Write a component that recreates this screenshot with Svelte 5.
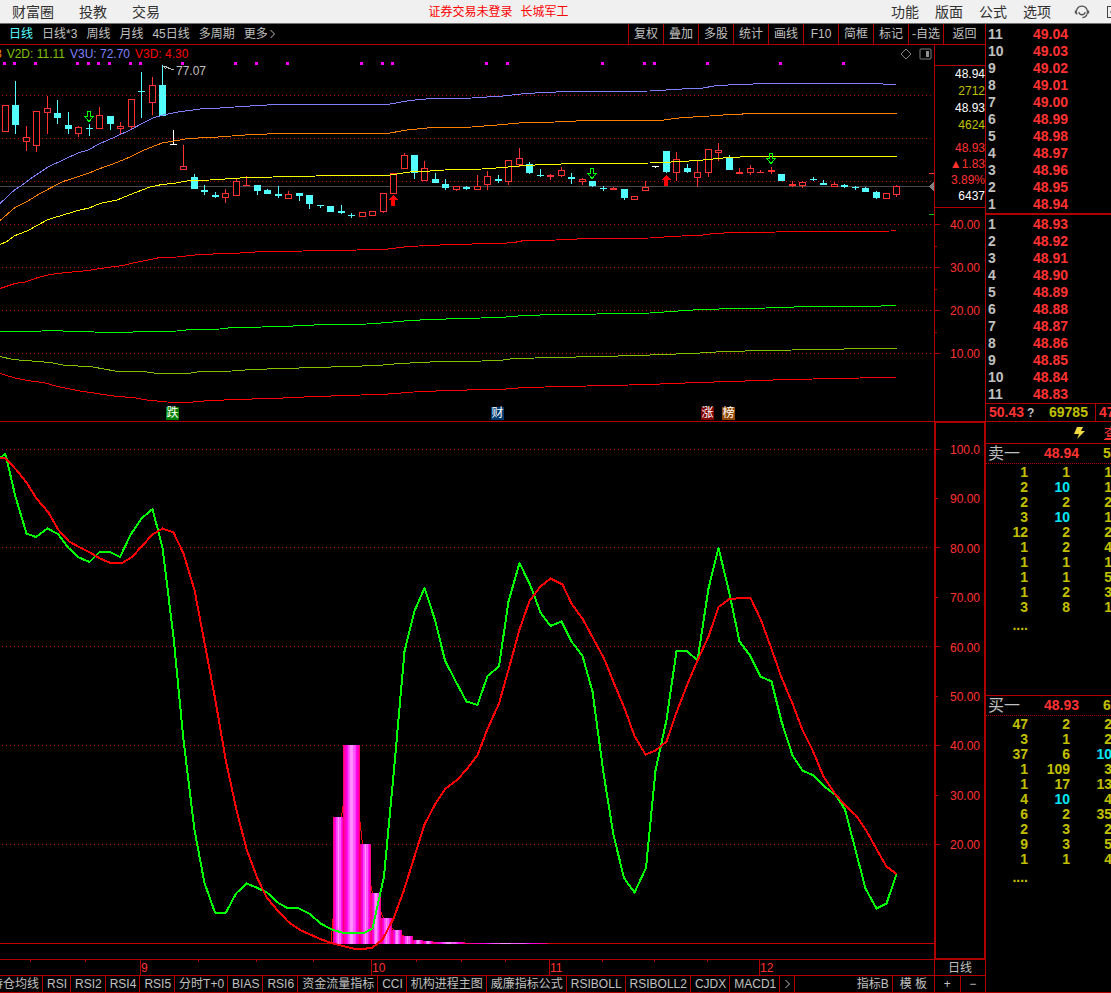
<!-- App.svelte - Daily K-line terminal with indicator pane and order book -->
<script lang="ts">
  type Kind = 'up' | 'down' | 'flat' | 'limit';
  type Candle = [x: number, high: number, top: number, bottom: number, low: number, kind: Kind];

  const menuLeft = ['财富圈', '投教', '交易'];
  const menuRight = ['功能', '版面', '公式', '选项'];

  const periods = ['日线', '日线*3', '周线', '月线', '45日线', '多周期', '更多'];
  const tools = ['复权', '叠加', '多股', '统计', '画线', 'F10', '简框', '标记', '-自选', '返回'];

  const quotes = [
    { text: '48.94', tone: 'white' },
    { text: '2712', tone: 'olive' },
    { text: '48.93', tone: 'white' },
    { text: '4624', tone: 'olive' },
    { text: '48.93', tone: 'red' },
    { text: '▲1.83', tone: 'red' },
    { text: '3.89%', tone: 'red' },
    { text: '6437', tone: 'white' },
  ];

  const priceTicks = ['40.00', '30.00', '20.00', '10.00'];
  const rsiTicks = ['100.0', '90.00', '80.00', '70.00', '60.00', '50.00', '40.00', '30.00', '20.00'];

  const tabs = [
    '持仓均线', 'RSI', 'RSI2', 'RSI4', 'RSI5', '分时T+0', 'BIAS', 'RSI6', '资金流量指标', 'CCI',
    '机构进程主图', '威廉指标公式', 'RSIBOLL', 'RSIBOLL2', 'CJDX', 'MACD1',
  ];

  const months = ['', '9', '10', '11', '12'];
  const weekTicks = [30, 85, 198, 256, 313, 416, 461, 505, 602, 654, 707];

  const priceGrid = [95, 138, 181, 224, 267, 310, 353];
  const rsiGrid = [449, 547, 646, 745, 844];

  const signalDots = [
    4, 14, 35, 77, 88, 98, 109, 130, 140, 182, 235, 256, 287, 361, 382, 392, 486, 507, 602, 644, 654, 707, 780, 843,
  ];

  const bands = [
    {
      color: '#8080ff',
      points: '0,203.5 15,189.5 21,186 33,177 48,167 63,160 78,153 88,150 100,143.5 115,137 130,130 143,123 153,118 163,115 178,112 200,109 220,108 242,106.5 275,104.5 387,104.5 410,100.5 432,98.5 472,98 503,96 525,93.5 567,91.5 650,91 682,89 703,88 717,85.5 740,84.5 766,83.5 870,83.5 896,84.5',
    },
    {
      color: '#ff8000',
      points: '0,220.5 15,207.5 27,201.5 40,193.5 63,181.5 88,173.5 100,168.5 113,164 130,157 143,150.5 162,143 177,140.5 188,138.5 218,137 252,134.5 283,133.5 387,133.5 407,130 432,127.5 472,127 503,124.5 525,122.5 555,122 587,120.5 660,120.5 683,117.5 703,116.5 723,115 740,114.5 745,113.5 896,113.5',
    },
    {
      color: '#ffff00',
      points: '0,244.5 7,241.5 14,236 28,230.5 37,225.5 48,219.5 63,215 78,210.5 89,208 100,203.5 117,200 133,193.5 150,187 162,184.5 173,183.5 190,180.5 210,180 240,178 273,177 337,175.5 387,175.5 410,172 430,171 452,169.5 482,169 503,167.5 525,165.5 545,164.5 577,163.5 650,163 682,161.5 703,160 723,158 740,157 755,156.5 896,156.5',
    },
    {
      color: '#ff0000',
      points: '0,288.5 15,283.5 25,282 38,277.5 50,274.5 62,273 88,270.5 100,268.5 123,265.5 133,263 143,261 160,257.5 177,257 200,254.5 240,253 263,251.5 303,251 357,250 388,249 408,246.5 440,245 472,244 500,243.5 514,242.5 524,240.5 556,240 588,238.5 650,238 671,236.5 703,235 714,233.5 734,232.5 776,232 891,231 896,230.5',
    },
    {
      color: '#00ff00',
      points: '0,331.5 3,332 10,331.5 42,331 53,330.5 73,331.5 115,332.5 126,333 137,331.5 177,331 190,329.5 220,329 232,327.5 262,327 293,326 325,324.5 367,324 388,322.5 410,320.5 430,319.5 462,318.5 500,317.5 524,315.5 556,314.5 597,314 650,313 671,311.5 693,310 714,309.5 724,308.5 766,308 808,306.5 881,306 896,305.5',
    },
    {
      color: '#80c000',
      points: '0,356.5 13,359.5 32,361 50,362.5 63,365 93,367 115,371 147,372 158,373.5 188,373.5 200,371.5 232,371 252,369.5 283,368.5 315,367.5 347,366.5 378,365.5 400,363.5 420,362.5 440,361.5 482,361 500,360.5 514,358.5 556,357.5 597,356.5 640,355.5 661,354.5 692,353.5 724,351.5 766,350.5 818,349.5 871,348.5 896,348.5',
    },
    {
      color: '#ff0000',
      points: '0,373.5 15,378 27,380.5 43,382.5 58,386.5 77,390.5 97,393.5 117,396.5 133,397.5 147,400 167,402 188,402.5 210,400.5 252,399 283,398 315,396.5 347,395.5 388,394 420,391.5 452,390.5 482,389.5 500,389.5 524,387.5 566,386.5 608,385.5 650,384.5 671,383.5 714,382 745,381 787,379.5 839,378.5 881,377.5 896,377',
    },
  ];

  const candles: Candle[] = [
    [5.5, 105, 105, 132, 132, 'up'], [15.5, 81, 105, 125, 134, 'down'], [26.5, 126, 137, 142, 151, 'up'],
    [36.5, 111, 111, 146, 152, 'up'], [47.5, 96, 108, 113, 134, 'up'], [57.5, 100, 113, 118, 124, 'down'],
    [68.5, 112, 125, 129, 134, 'down'], [78.5, 126, 127, 134, 137, 'up'], [89.5, 124, 128, 129, 136, 'down'],
    [99.5, 107, 115, 129, 129, 'up'], [110.5, 116, 116, 124, 130, 'down'], [120.5, 122, 126, 129, 134, 'up'],
    [131.5, 99, 99, 127, 130, 'up'], [141.5, 72, 91, 92, 118, 'down'], [152.5, 77, 85, 103, 115, 'up'],
    [162.5, 65, 85, 116, 116, 'down'], [173.5, 130, 144, 145, 145, 'limit'], [183.5, 145, 166, 170, 170, 'up'],
    [194.5, 174, 177, 189, 189, 'down'], [204.5, 185, 190, 192, 195, 'down'], [215.5, 192, 195, 197, 198, 'down'],
    [225.5, 189, 193, 198, 203, 'up'], [236.5, 178, 181, 196, 196, 'up'], [246.5, 176, 185, 186, 186, 'flat'],
    [257.5, 185, 185, 191, 195, 'down'], [267.5, 189, 190, 194, 194, 'down'], [278.5, 186, 194, 196, 198, 'down'],
    [288.5, 191, 194, 199, 199, 'up'], [299.5, 193, 193, 196, 201, 'down'], [309.5, 195, 195, 204, 209, 'down'],
    [320.5, 205, 205, 206, 208, 'down'], [330.5, 206, 206, 212, 212, 'down'], [341.5, 205, 211, 213, 214, 'down'],
    [351.5, 213, 215, 216, 218, 'down'], [362.5, 212, 212, 217, 217, 'up'], [372.5, 211, 211, 216, 216, 'up'],
    [383.5, 193, 193, 212, 213, 'up'], [393.5, 173, 173, 194, 194, 'up'], [404.5, 153, 155, 169, 169, 'up'],
    [414.5, 155, 155, 173, 179, 'down'], [424.5, 161, 168, 181, 181, 'up'], [435.5, 173, 179, 183, 183, 'down'],
    [445.5, 179, 184, 188, 190, 'down'], [456.5, 186, 186, 190, 191, 'up'], [466.5, 186, 187, 189, 190, 'down'],
    [477.5, 175, 186, 190, 190, 'up'], [487.5, 171, 176, 185, 190, 'up'], [498.5, 175, 179, 181, 183, 'down'],
    [508.5, 160, 160, 182, 185, 'up'], [519.5, 148, 158, 165, 167, 'up'], [529.5, 162, 164, 173, 174, 'down'],
    [540.5, 169, 175, 176, 177, 'down'], [550.5, 174, 175, 177, 180, 'flat'], [561.5, 167, 170, 176, 177, 'up'],
    [571.5, 173, 177, 179, 184, 'down'], [582.5, 178, 179, 182, 185, 'up'], [592.5, 181, 181, 186, 187, 'down'],
    [603.5, 186, 188, 189, 191, 'down'], [613.5, 187, 188, 190, 190, 'flat'], [624.5, 189, 189, 198, 200, 'down'],
    [634.5, 196, 196, 200, 200, 'up'], [645.5, 181, 187, 191, 191, 'up'], [655.5, 166, 166, 167, 168, 'limit'],
    [666.5, 151, 151, 172, 173, 'down'], [676.5, 152, 159, 173, 181, 'up'], [687.5, 164, 168, 172, 173, 'down'],
    [697.5, 161, 172, 178, 187, 'up'], [708.5, 149, 149, 173, 177, 'up'], [718.5, 143, 150, 153, 161, 'up'],
    [729.5, 155, 157, 170, 170, 'down'], [739.5, 168, 172, 174, 174, 'flat'], [750.5, 165, 168, 173, 175, 'up'],
    [760.5, 170, 172, 173, 173, 'flat'], [771.5, 167, 170, 172, 174, 'flat'], [781.5, 174, 174, 181, 181, 'down'],
    [792.5, 181, 184, 186, 187, 'flat'], [802.5, 181, 182, 186, 188, 'up'], [813.5, 177, 179, 180, 181, 'down'],
    [823.5, 180, 183, 185, 185, 'down'], [834.5, 182, 184, 187, 187, 'up'], [844.5, 184, 185, 187, 188, 'down'],
    [855.5, 186, 187, 188, 190, 'down'], [865.5, 187, 188, 192, 192, 'down'], [876.5, 191, 192, 198, 199, 'down'],
    [886.5, 193, 193, 199, 199, 'up'], [896.5, 185, 186, 195, 197, 'up'],
  ];

  const sellArrows = [[89, 111], [592, 168], [771, 153]];
  const buyArrows = [[393, 195], [666, 175]];

  const events = [
    { text: '跌', x: 166, tone: 'green' },
    { text: '财', x: 491, tone: 'blue' },
    { text: '涨', x: 701, tone: 'maroon' },
    { text: '榜', x: 722, tone: 'brown' },
  ];

  // x, width, top of each energy bar
  const bars = [
    [333, 11, 817], [343, 17, 745], [360, 11, 844], [371, 10, 893], [381, 11, 918], [392, 10, 930],
    [402, 11, 936], [413, 10, 940], [423, 10, 941], [433, 32, 942], [465, 83, 943],
  ];

  const fastLine =
    '0,458 5,454 6,456 15,495 26.5,533.5 36,537 47.5,528.5 58,534 68,547.5 79,557.5 89.5,562 99.5,552 110,552 120,557 131,534 142,518 152.5,509 162.5,547.5 173.5,637 183.5,740 194.5,830 204.5,883 215,912.5 226,912.5 236,893.5 246.5,883.5 256.5,887.5 267,892.5 279,903.5 287.5,908 299,908.5 310,914 320.5,923.5 332,929.5 341.5,932.5 365,932.5 372.5,928.5 384,876.5 394,770 404.5,651.5 414.5,611 424.5,588 435,620 445,660.5 455,680 466.5,701.5 477.5,705 487.5,676 499,666.5 508.5,601.5 519.5,563 530,584.5 540.5,612.5 550.5,626 561.5,621.5 571.5,641.5 582.5,656 592.5,691.5 603.5,773 613.5,835 624,878 634.5,892.5 646,868 655.5,770.5 666.5,720 676.5,651 687,651 697.5,660.5 708.5,588.5 718.5,548 729,591.5 739.5,641.5 750,655.5 760.5,676.5 771.5,681.5 781.5,721.5 792.5,755.5 802.5,770.5 813.5,775.5 824.5,786.5 835.5,795 845,809.5 855.5,850 865.5,888.5 876.5,908.5 886.5,903.5 896.5,874';

  const slowLine =
    '0,458 5,458 16.5,470 26.5,482.5 36.5,498.5 48.5,512.5 58.5,530 69,541.5 80,547.5 90,552.5 100,558.5 110.5,563 122,563 132,557 142.5,545.5 152.5,534.5 162.5,528.5 173.5,532.5 183.5,553.5 194.5,590 204,640 215,698 226,761.5 236.5,810 246.5,849 257.5,878.5 266.5,897 277.5,910.5 288.5,922 300,930 310,934.5 321.5,939.5 333,943.5 353,948.5 366.5,948.5 372.5,947.5 382.5,939.5 393.5,918.5 403.5,891.5 414.5,856.5 424.5,824.5 435,804.5 445.5,788.5 456.5,780.5 467.5,768.5 477.5,755 487.5,729 499,703.5 509,668 519.5,629.5 529.5,601 540.5,586.5 550.5,578.5 562.5,584.5 571.5,603.5 583,619.5 593.5,639 604,658.5 612.5,679.5 625,709.5 634.5,736 645.5,754.5 655.5,750.5 666.5,741.5 676.5,712.5 687.5,684 698,659.5 708.5,636.5 718.5,607 729.5,599 743,598 750.5,598 761,620 771.5,649 781.5,677.5 792.5,703.5 802.5,730 812.5,750 823.5,776.5 835.5,794.5 845,805 856,815.5 866.5,831 876.5,849 886.5,866.5 896.5,874';

  const asks = Array.from({ length: 11 }, (_, i) => ({ level: 11 - i, price: (49.04 - i / 100).toFixed(2) }));
  const bids = Array.from({ length: 11 }, (_, i) => ({ level: i + 1, price: (48.93 - i / 100).toFixed(2) }));

  const queues = [
    {
      side: '卖一',
      price: '48.94',
      count: '5',
      rows: [[1, 1, 1], [2, 10, 1], [2, 2, 2], [3, 10, 1], [12, 2, 2], [1, 2, 4], [1, 1, 1], [1, 1, 5], [1, 2, 3], [3, 8, 1]],
    },
    {
      side: '买一',
      price: '48.93',
      count: '6',
      rows: [[47, 2, 2], [3, 1, 2], [37, 6, 10], [1, 109, 3], [1, 17, 13], [4, 10, 4], [6, 2, 35], [2, 3, 2], [9, 3, 5], [1, 1, 4]],
    },
  ];

  let activePeriod = $state('日线');
</script>

<div class="terminal">
  <header class="menu-bar">
    <nav class="menu-left">
      {#each menuLeft as item}
        <button>{item}</button>
      {/each}
    </nav>
    <p class="title"><span>证券交易未登录</span><span>长城军工</span></p>
    <nav class="menu-right">
      {#each menuRight as item}
        <button>{item}</button>
      {/each}
      <button class="icon-button" aria-label="客服">
        <svg width="16" height="16" viewBox="0 0 16 16" fill="none" stroke="#555" stroke-width="1.3">
          <path d="M3 10.5A5.6 5.6 0 1 1 12.8 10.5" />
          <path d="M1.6 6.5v3M14.4 6.5v3" stroke-width="1.6" />
          <path d="M4.8 8.2c.6 3.4 5.8 3.4 6.4 0" />
          <path d="M13 10.4c-.8 2-2.2 3-4.6 3.2" />
        </svg>
      </button>
      <button class="icon-button last" aria-label="窗口">
        <svg width="14" height="16" viewBox="0 0 14 16" fill="none" stroke="#444">
          <rect x="1.5" y="2.5" width="11" height="11" />
          <path d="M4 8h7" />
        </svg>
      </button>
    </nav>
  </header>

  <div class="workspace">
    <main class="charts">
      <div class="toolbar">
        <div class="periods">
          {#each periods as period}
            <button class:active={period === activePeriod} onclick={() => (activePeriod = period)}>
              {period}{#if period === '更多'}<svg width="7" height="10" viewBox="0 0 7 10" fill="none" stroke="currentColor"><path d="M1.5 1l4 4-4 4" /></svg>{/if}
            </button>
          {/each}
        </div>
        <div class="tools">
          {#each tools as tool}
            <button>{tool}</button>
          {/each}
        </div>
      </div>

      <section class="pane price-pane" aria-label="K线主图">
        <div class="legend">
          <p>
            <span class="edge">8</span>
            <span class="v2d">V2D: 11.11</span>
            <span class="v3u">V3U: 72.70</span>
            <span class="v3d">V3D: 4.30</span>
          </p>
          <button class="icon-button" aria-label="标记点">
            <svg width="12" height="12" viewBox="0 0 12 12" fill="none" stroke="#808080"><path d="M6 1l5 5-5 5-5-5z" /></svg>
          </button>
          <button class="icon-button" aria-label="侧栏">
            <svg width="13" height="12" viewBox="0 0 13 12">
              <rect x="1" y="1" width="11" height="10" rx="1" fill="none" stroke="#808080" />
              <path d="M7 3h3v6h-3z" fill="#909090" />
            </svg>
          </button>
        </div>
        <svg class="plot" viewBox="0 62 934 359" preserveAspectRatio="none" shape-rendering="crispEdges">
          {#each priceGrid as y}
            <line class="grid" x1="2" x2="934" y1={y + 0.5} y2={y + 0.5} />
          {/each}
          <line x1="0" x2="932" y1="186.5" y2="186.5" stroke="#484848" />
          <path d="M934 182v9l-5-4.5z" fill="#808080" />
          <path d="M929 173.5h5" stroke="#ff3232" />
          <path d="M929 214.5h5" stroke="#00c000" />

          {#each signalDots as x}
            <rect x={x - 1} y="62" width="3" height="3" fill="#ff00ff" />
          {/each}

          {#each candles as [x, high, top, bottom, low, kind]}
            <g class={kind}>
              <line x1={x} x2={x} y1={high} y2={low} />
              {#if kind === 'up'}
                <rect x={x - 3} y={top + 0.5} width="6" height={bottom - top - 1} />
              {:else}
                <rect x={x - 3.5} y={top} width="7" height={bottom - top} />
              {/if}
            </g>
          {/each}

          {#each bands as band}
            <polyline class="band" points={band.points} stroke={band.color} />
          {/each}

          {#each sellArrows as [x, y]}
            <path transform="translate({x} {y})" d="M-1.5 .5h3v5h3l-4.500 5-4.500-5h3z" fill="none" stroke="#00ff00" />
          {/each}
          {#each buyArrows as [x, y]}
            <path transform="translate({x} {y})" d="M0 0l5 5h-3v6h-4v-6h-3z" fill="#ff0000" />
          {/each}
          <path d="M163 66l11 4M163 66h4M163 66l3 3" fill="none" stroke="#c0c0c0" />
        </svg>
        <span class="peak" style="left: {(176 / 934) * 100}%">77.07</span>
        {#each events as event}
          <span class="event {event.tone}" style="left: {(event.x / 934) * 100}%">{event.text}</span>
        {/each}
      </section>

      <aside class="axis price-axis">
        <div class="quotes">
          {#each quotes as quote}
            <span class={quote.tone}>{quote.text}</span>
          {/each}
        </div>
        <div class="ticks">
          {#each priceTicks as tick}
            <span>{tick}</span>
          {/each}
        </div>
        <svg class="marks" viewBox="0 45 50 376" preserveAspectRatio="none" shape-rendering="crispEdges">
          <path d="M0 224.500h5M0 246.500h2M0 267.500h5M0 289.500h2M0 310.500h5M0 332.500h2M0 353.500h5" />
        </svg>
      </aside>

      <section class="pane rsi-pane" aria-label="RSI副图">
        <svg class="plot" viewBox="0 422 934 537" preserveAspectRatio="none" shape-rendering="crispEdges">
          <defs>
            <linearGradient id="energy">
              <stop offset="0" stop-color="#ff0060" />
              <stop offset="0.1" stop-color="#ff00b0" />
              <stop offset="0.25" stop-color="#ff00f0" />
              <stop offset="0.35" stop-color="#ff60ff" />
              <stop offset="0.42" stop-color="#ff50ff" />
              <stop offset="0.42" stop-color="#ff90ff" />
              <stop offset="0.56" stop-color="#ff90ff" />
              <stop offset="0.56" stop-color="#ff50ff" />
              <stop offset="0.7" stop-color="#ff60ff" />
              <stop offset="0.8" stop-color="#ff00f0" />
              <stop offset="0.92" stop-color="#ff00b0" />
              <stop offset="1" stop-color="#ff0050" />
            </linearGradient>
          </defs>
          {#each rsiGrid as y}
            <line class="grid" x1="2" x2="934" y1={y + 0.5} y2={y + 0.5} />
          {/each}
          <polyline points="331,943 341.5,817 351.5,745 362.5,844 372.5,893 383.5,918 394,930 404,936" fill="none" stroke="#ff0000" />
          <line x1="0" x2="934" y1="943.5" y2="943.5" stroke="#c80000" />
          {#each bars as [x, width, top]}
            <rect {x} y={top} {width} height={944 - top} fill="url(#energy)" />
          {/each}
          <polyline class="rsi-line" points={fastLine} stroke="#00ff00" />
          <polyline class="rsi-line" points={slowLine} stroke="#ff0000" />
        </svg>
      </section>

      <aside class="axis rsi-axis">
        <div class="ticks">
          {#each rsiTicks as tick}
            <span>{tick}</span>
          {/each}
        </div>
        <svg class="marks" viewBox="0 423 48 535" preserveAspectRatio="none" shape-rendering="crispEdges">
          <path d="M0 449.500h4M0 498.500h2M0 547.500h4M0 597.500h2M0 646.500h4M0 696.500h2M0 745.500h4M0 795.500h2M0 844.500h4" />
        </svg>
      </aside>

      <div class="time-axis">
        {#each months as month}
          <span>{month}</span>
        {/each}
        <svg class="marks" viewBox="0 0 934 15" preserveAspectRatio="none" shape-rendering="crispEdges">
          {#each weekTicks as x}
            <path d="M{x + 0.5} 0v2" />
          {/each}
        </svg>
      </div>
      <button class="period-cell">日线</button>

      <nav class="tabs">
        {#each tabs as tab}
          <button>{tab}</button>
        {/each}
        <button aria-label="更多指标">
          <svg width="7" height="10" viewBox="0 0 7 10" fill="none" stroke="currentColor"><path d="M1.500 1l4 4-4 4" /></svg>
        </button>
        <button class="push">指标B</button>
        <button class="template">模 板</button>
      </nav>
      <div class="zoom">
        <button aria-label="放大">+</button>
        <button aria-label="缩小">−</button>
      </div>
    </main>

    <aside class="book">
      <table class="levels">
        <tbody>
          {#each asks as row}
            <tr><th scope="row">{row.level}</th><td>{row.price}</td></tr>
          {/each}
        </tbody>
      </table>
      <table class="levels bids">
        <tbody>
          {#each bids as row}
            <tr><th scope="row">{row.level}</th><td>{row.price}</td></tr>
          {/each}
        </tbody>
      </table>

      <div class="totals">
        <span class="avg">50.43<small>?</small></span>
        <span class="volume">69785</span>
        <span class="side">47</span>
      </div>

      <div class="actions">
        <button class="icon-button" aria-label="闪电下单">
          <svg width="14" height="14" viewBox="0 0 14 14"><path d="M5 1h6l-2 4h4l-8 8 2-5H2z" fill="#f0d840" /></svg>
        </button>
        <a href="#queue">查</a>
      </div>

      {#each queues as queue}
        <section class="queue" id={queue.side === '卖一' ? 'queue' : undefined}>
          <h2><span class="side-name">{queue.side}</span><span class="price">{queue.price}</span><span class="count">{queue.count}</span></h2>
          <table>
            <tbody>
              {#each queue.rows as row}
                <tr>
                  {#each row as cell}
                    <td class:big={cell === 10}>{cell}</td>
                  {/each}
                </tr>
              {/each}
              <tr class="more"><td>....</td><td></td><td></td></tr>
            </tbody>
          </table>
        </section>
      {/each}
    </aside>
  </div>
</div>

<style>
  :global(body) {
    background: #000;
  }

  .terminal {
    --line: #b00000;
    --text: #c0c0c0;
    --red: #ff3232;
    --olive: #c0c000;
    display: flex;
    flex-direction: column;
    box-sizing: border-box;
    min-height: 100vh;
    border-bottom: 1px solid var(--line);
    background: #000;
    color: var(--text);
    font: 12px/16px 'Liberation Sans', 'Noto Sans CJK SC', sans-serif;
    white-space: nowrap;
    overflow: hidden;
  }

  button {
    margin: 0;
    padding: 0;
    border: 0;
    background: none;
    color: inherit;
    font: inherit;
    cursor: pointer;
  }

  svg {
    display: block;
  }

  p,
  h2 {
    margin: 0;
  }

  table {
    border-collapse: collapse;
    table-layout: fixed;
  }

  td,
  th {
    padding: 0;
  }

  /* Menu */
  .menu-bar {
    display: flex;
    align-items: center;
    justify-content: space-between;
    box-sizing: border-box;
    height: 24px;
    padding-left: 12px;
    border-bottom: 1px solid #707070;
    background: #f0f0f0;
    color: #303030;
    font-size: 14px;
  }

  .menu-left {
    display: flex;
    gap: 25px;
  }

  .title {
    display: flex;
    gap: 8px;
    padding-right: 54px;
    color: #ff0000;
    font-size: 12px;
  }

  .menu-right {
    display: flex;
    align-items: center;
    gap: 16px;
  }

  .menu-right .icon-button {
    margin-left: 7px;
  }

  .menu-right .last {
    margin-left: 0;
    margin-right: -9px;
  }

  .workspace {
    display: flex;
    flex: 1;
  }

  .charts {
    display: grid;
    flex: 1;
    grid-template-columns: minmax(0, 1fr) 52px;
    grid-template-rows: 21px minmax(376px, 376fr) minmax(539px, 539fr) 16px 16px;
    min-width: 0;
  }

  /* Toolbar */
  .toolbar {
    grid-column: 1 / -1;
    display: flex;
    justify-content: space-between;
    border-bottom: 1px solid var(--line);
    border-right: 1px solid var(--line);
  }

  .periods {
    display: flex;
    gap: 9px;
    padding-left: 9px;
  }

  .periods button {
    display: flex;
    align-items: center;
    gap: 1px;
  }

  .periods .active {
    color: #54ffff;
  }

  .tools {
    display: flex;
  }

  .tools button {
    width: 35px;
    border-left: 1px solid var(--line);
  }

  .tools button:last-child {
    width: 42px;
  }

  /* Chart panes */
  .pane {
    position: relative;
    display: flex;
    flex-direction: column;
    min-width: 0;
    overflow: hidden;
  }

  .plot {
    flex: 1;
    width: 100%;
    min-height: 0;
  }

  .rsi-pane {
    border-top: 1px solid var(--line);
    border-bottom: 1px solid var(--line);
  }

  .grid {
    stroke: #b00000;
    stroke-dasharray: 1 3;
  }

  .legend {
    display: flex;
    align-items: center;
    gap: 7px;
    height: 17px;
    padding-right: 2px;
  }

  .legend p {
    display: flex;
    flex: 1;
    gap: 5px;
    margin-left: -5px;
  }

  .edge { color: #ff8000; }
  .v2d { color: #80c000; }
  .v3u { color: #8080ff; }
  .v3d { color: #ff0000; }

  .up line,
  .up rect { stroke: #ff3232; }
  .up rect { fill: #000; }
  .down line { stroke: #54ffff; }
  .down rect { fill: #54ffff; }
  .flat line { stroke: #ff3232; }
  .flat rect { fill: #ff3232; }
  .limit line { stroke: #fff; }
  .limit rect { fill: #fff; }

  .band {
    fill: none;
    stroke-linecap: square;
    stroke-linejoin: round;
  }

  .rsi-line {
    fill: none;
    stroke-width: 2;
    stroke-linejoin: round;
  }

  .peak {
    position: absolute;
    top: 18px;
  }

  .event {
    position: absolute;
    bottom: 1px;
    width: 13px;
    height: 13px;
    color: #fff;
    font-size: 12px;
    line-height: 13px;
    text-align: center;
  }

  .event.green { background: #008000; }
  .event.blue { background: #003a70; }
  .event.maroon { background: #800000; }
  .event.brown { background: #904800; }

  /* Value axes */
  .axis {
    position: relative;
    color: var(--red);
    text-align: right;
  }

  .price-axis {
    padding-top: 20px;
    border-left: 1px solid var(--line);
    border-right: 1px solid var(--line);
  }

  .quotes {
    display: flex;
    flex-direction: column;
    height: 141px;
    border-top: 1px solid var(--line);
    border-bottom: 1px solid var(--line);
  }

  .quotes span:nth-child(-n + 4) {
    line-height: 17px;
  }

  .quotes span:nth-child(5) {
    margin-top: 6px;
  }

  .white { color: #fff; }
  .olive { color: var(--olive); }
  .red { color: var(--red); }

  .ticks {
    display: flex;
    flex-direction: column;
    line-height: 20px;
  }

  .price-axis .ticks {
    gap: 23px;
    padding: 7px 5px 0 0;
  }

  .rsi-axis {
    display: flex;
    flex-direction: column;
    border: 2px solid var(--line);
  }

  .rsi-axis .ticks {
    flex: 1;
    justify-content: space-between;
    padding: 17px 4px 103px 0;
  }

  .marks {
    position: absolute;
    inset: 0;
    width: 100%;
    height: 100%;
    fill: none;
    stroke: var(--line);
    pointer-events: none;
  }

  /* Time axis and indicator tabs */
  .time-axis {
    position: relative;
    display: grid;
    grid-template-columns: 140fr 231fr 178fr 210fr 175fr;
    border-bottom: 1px solid var(--line);
    color: var(--red);
  }

  .time-axis span + span {
    border-left: 1px solid var(--line);
  }

  .period-cell {
    border: solid var(--line);
    border-width: 0 1px 1px;
  }

  .tabs {
    display: flex;
    min-width: 0;
    overflow: hidden;
  }

  .tabs button {
    flex: none;
    padding: 0 3px 0 4px;
    border-right: 1px solid var(--line);
  }

  .tabs button:first-child {
    display: flex;
    justify-content: flex-end;
    width: 43px;
    box-sizing: border-box;
  }

  .tabs .push {
    margin-left: auto;
  }

  .tabs .template {
    padding: 0 7px;
    border-right: 0;
  }

  .zoom {
    display: grid;
    grid-template-columns: 1fr 1fr;
    border-right: 1px solid var(--line);
  }

  .zoom button {
    border-left: 1px solid var(--line);
  }

  /* Order book */
  .book {
    display: flex;
    flex-direction: column;
    width: 125px;
    font-size: 14px;
    font-weight: bold;
    overflow: hidden;
  }

  .levels {
    width: 126px;
    margin: 2px 0 0 2px;
    line-height: 17px;
  }

  .levels tr {
    height: 17px;
  }

  .levels th {
    width: 45px;
    text-align: left;
  }

  .levels td {
    color: var(--red);
  }

  .bids {
    width: 128px;
    margin: 0;
    padding-top: 1px;
    border-collapse: separate;
    border-spacing: 0;
    border-top: 2px solid var(--line);
  }

  .bids th {
    padding-left: 2px;
  }

  .totals {
    display: flex;
    gap: 3px;
    flex: none;
    width: 128px;
    height: 17px;
    border: solid var(--line);
    border-width: 1px 0;
    line-height: 17px;
  }

  .avg {
    flex: none;
    width: 57px;
    padding-left: 3px;
    color: var(--red);
  }

  .avg small {
    padding-left: 3px;
    color: var(--text);
    font-size: 12px;
  }

  .volume {
    flex: none;
    width: 43px;
    color: var(--olive);
  }

  .side {
    padding-left: 3px;
    border-left: 1px solid var(--line);
    color: var(--red);
  }

  .actions {
    display: flex;
    flex: none;
    align-items: center;
    gap: 18px;
    height: 21px;
    padding-left: 86px;
    font-weight: normal;
  }

  .actions a {
    color: var(--red);
  }

  .queue {
    flex: none;
    height: 251px;
    border-top: 1px solid var(--line);
  }

  .queue:last-child {
    margin-bottom: auto;
  }

  .queue h2 {
    display: flex;
    gap: 24px;
    height: 19px;
    padding-left: 2px;
    border-bottom: 1px dotted var(--line);
    font-size: inherit;
    line-height: 19px;
  }

  .side-name {
    font-size: 16px;
    font-weight: normal;
  }

  .price { color: var(--red); }
  .count { color: var(--olive); }

  .queue table {
    width: 126px;
    margin-top: 1px;
    color: var(--olive);
    line-height: 15px;
    text-align: right;
  }

  .queue td {
    width: 42px;
    height: 15px;
  }

  .queue .more td {
    padding-top: 3px;
  }

  .queue .big {
    color: #00e8f8;
  }
</style>
